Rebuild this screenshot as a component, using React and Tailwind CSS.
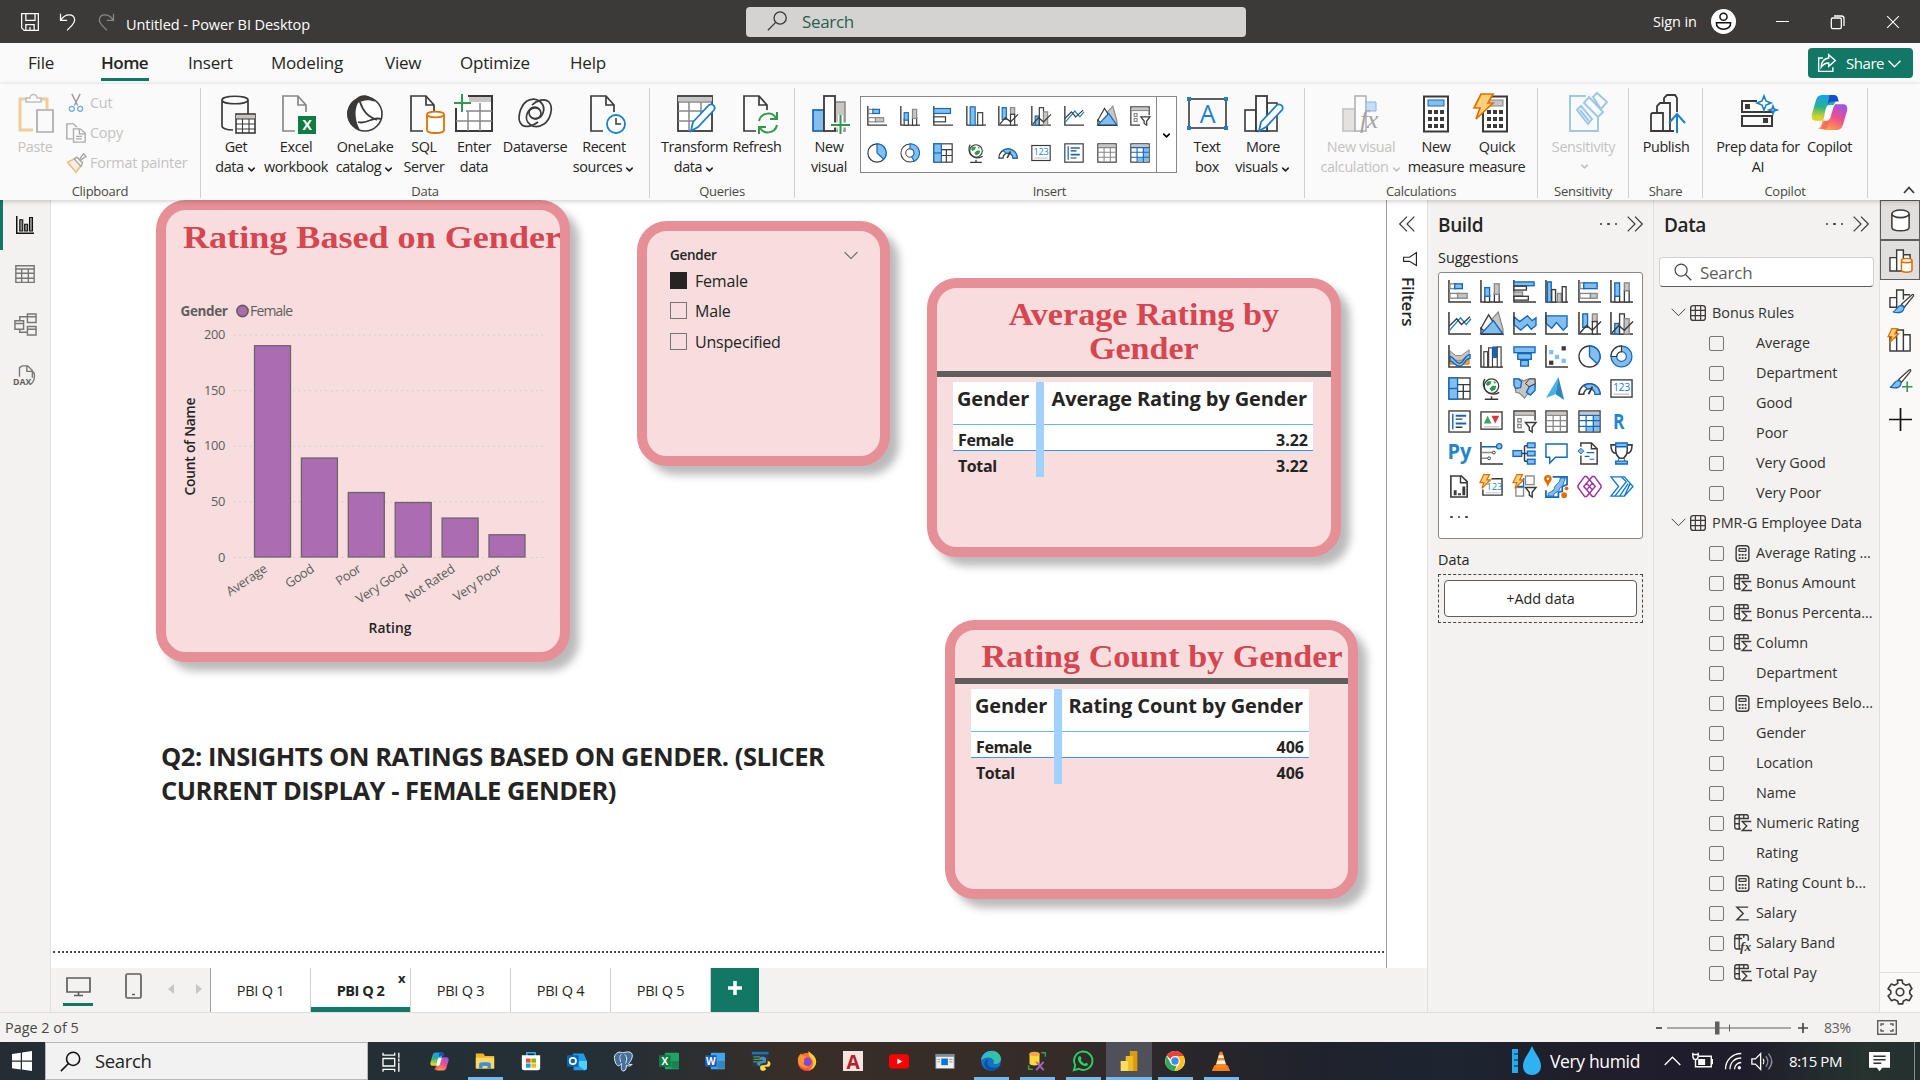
import React from "react";
import { ChevronDown } from "lucide-react";

const D = "#3b3a39";
const B = "#83beec";
const S = "#1068bf";
const G = "#c8c6c4";
const H = "#8a8886";
const O = "#e07000";

const Svg = ({ w = 24, h, vb, className = "", children }) => (
  <svg width={w} height={h || w} viewBox={vb || "0 0 24 24"} fill="none" className={"shrink-0 overflow-visible " + className}>
    {children}
  </svg>
);

const Axis = () => <path d="M1 0V23H24" stroke={D} strokeWidth="1.6" />;
const R = ({ x, y, w, h, f = "#fff", s = D, sw = 1.4 }) => (
  <rect x={x} y={y} width={w} height={h} fill={f} stroke={s} strokeWidth={sw} />
);
const Bolt = () => <path d="M5 .5h6L8 6h4L3 15l2-6H1z" fill="#ffd079" stroke={O} strokeWidth="1.3" />;
const Funnel = () => <path d="M13 13h11l-4 5v5l-3-2v-3z" fill="#fff" stroke={D} strokeWidth="1.5" />;

/* Visual type glyphs, all drawn on a 24 x 24 grid */
const V = {
  stackedBar: <><Axis /><R x={2} y={4} w={6} h={5} s={H} /><R x={7} y={4} w={8} h={5} f={B} s={S} /><R x={2} y={14} w={9} h={5} s={H} /><R x={10} y={14} w={10} h={5} f={G} s={H} /></>,
  stackedCol: <><Axis /><R x={5} y={16} w={5} h={7} s={D} /><R x={5} y={8} w={5} h={9} f={B} s={S} /><R x={15} y={14} w={5} h={9} s={D} /><R x={15} y={4} w={5} h={11} f={G} s={H} /></>,
  clusterBar: <><Axis /><R x={1} y={2} w={21} h={4} f={B} s={S} /><R x={1} y={6.5} w={13} h={4} s={D} /><R x={1} y={12.5} w={9} h={4} f={G} s={H} /><R x={1} y={17} w={15} h={4} s={D} /></>,
  clusterBarS: <><Axis /><R x={1} y={3} w={20} h={6} f={B} s={S} /><R x={1} y={13} w={14} h={6} s={D} /></>,
  clusterCol: <><Axis /><R x={2.5} y={2} w={4} h={21} f={B} s={S} /><R x={7} y={10} w={4} h={13} /><R x={13} y={14} w={4} h={9} f={G} s={H} /><R x={18} y={7} w={4} h={16} /></>,
  clusterColS: <><Axis /><R x={5} y={1} w={6} h={22} f={B} s={S} /><R x={14} y={8} w={6} h={15} /></>,
  fullBar: <><Axis /><R x={2} y={3} w={5} h={6} s={H} /><R x={6} y={3} w={14} h={6} f={B} s={S} /><R x={2} y={14} w={11} h={5} s={H} /><R x={13} y={14} w={7} h={5} f={G} s={H} /></>,
  fullCol: <><Axis /><R x={5} y={17} w={5} h={6} /><R x={5} y={3} w={5} h={14} f={B} s={S} /><R x={15} y={11} w={5} h={12} /><R x={15} y={3} w={5} h={8} f={G} s={H} /></>,
  line: <><Axis /><path d="M1 20 13 6l6 7 5-6" stroke="#1a86d0" strokeWidth="1.4" /><path d="M1 15 9 7l5 6 9-8" stroke={D} strokeWidth="1.4" /></>,
  area: <><path d="M12 8 19 0l5 18v5z" fill={G} stroke={H} strokeWidth="1.3" /><path d="M1 17 9 3l7 11-8 9z" fill="#fff" stroke={D} strokeWidth="1.4" /><path d="M1 23 14 9l10 14z" fill={B} stroke={S} strokeWidth="1.4" /><path d="M1 23V16M1 23.2H24" stroke={D} strokeWidth="1.5" /></>,
  stackedArea: <><path d="m1 5 6 5 8-6 5 5 4-3v8l-5 4-4-5-7 6-7-6z" fill={B} stroke={S} strokeWidth="1.4" /><Axis /></>,
  fullArea: <><path d="M1 4h22v11l-4 4-7-8-5 6-6-5z" fill={B} stroke={S} strokeWidth="1.4" /><Axis /></>,
  lineStack: <><Axis /><R x={5} y={2} w={5} h={14} f={B} s={S} /><R x={15} y={2} w={5} h={8} f={G} s={H} /><R x={15} y={10} w={5} h={13} /><path d="m2 22 7-8 6 5 9-9" stroke={D} strokeWidth="1.5" /></>,
  lineCluster: <><Axis /><R x={5} y={12} w={5} h={11} f={B} s={S} /><R x={10} y={2} w={5} h={21} /><R x={15} y={7} w={5} h={16} f={G} s={H} /><path d="m2 22 7-8 6 5 9-9" stroke={D} strokeWidth="1.5" /></>,
  ribbon: <><path d="M2 14h20v6H2z" fill="#f7a64a" stroke={O} /><path d="m2 6 6 5h6l8-6v5l-8 6H8l-6-5z" fill={G} stroke={H} /><path d="M2 12c5 0 5 7 10 7s5-9 11-9v4c-6 0-5 8-11 8S7 17 2 17z" fill={B} stroke={S} strokeWidth="1.4" /><Axis /></>,
  waterfall: <><Axis /><R x={4} y={7} w={4} h={16} sw={1.2} /><R x={9} y={3} w={4} h={20} sw={1.2} /><R x={13.5} y={2} w={4} h={11} f={S} s={S} sw={1} /><R x={18} y={2} w={4} h={21} sw={1.2} /></>,
  funnel: <><R x={1} y={2} w={22} h={6} f={B} s={S} /><R x={5} y={9} w={14} h={6} f={B} s={S} /><R x={8} y={16} w={8} h={6} f={B} s={S} /></>,
  scatter: <><Axis /><R x={5} y={6} w={3} h={3} f={B} s={B} /><R x={18} y={2} w={3} h={3} f={D} /><R x={11} y={11} w={3} h={3} f={B} s={B} /><R x={5} y={17} w={3} h={3} f={D} /><R x={18} y={15} w={3} h={3} f={B} s={B} /></>,
  pie: <><circle cx="12" cy="12" r="11" fill="#fff" stroke={D} strokeWidth="1.4" /><path d="M12 1a11 11 0 0 1 8 18.5L12 12z" fill={B} stroke={S} strokeWidth="1.4" /></>,
  donut: <><circle cx="12" cy="12" r="8" stroke={S} strokeWidth="7" /><circle cx="12" cy="12" r="8" stroke={B} strokeWidth="4.6" /><path d="M12 1A11 11 0 0 0 1 12h6a5 5 0 0 1 5-5z" fill="#fff" stroke={D} strokeWidth="1.3" /></>,
  donutS: <><circle cx="12" cy="12" r="8" stroke={D} strokeWidth="7" /><circle cx="12" cy="12" r="8" stroke="#fff" strokeWidth="4.6" /><path d="M12 1a11 11 0 0 1 5 21l-3-5.500A5 5 0 0 0 12 7z" fill={B} stroke={S} strokeWidth="1.3" /></>,
  treemap: <><R x={1} y={1} w={22} h={22} /><R x={1} y={1} w={9} h={22} f={B} s={S} /><path d="M1 12h9" stroke={S} strokeWidth="1.4" /><path d="M10 8h13M16 8v15M16 15h7M10 15h6" stroke={D} strokeWidth="1.4" /></>,
  globe: <><circle cx="12" cy="9.5" r="7.5" fill="#fff" stroke={D} strokeWidth="1.3" /><path d="M8 4.500h4l-1 3-3 2-2-2zM13 9l4 0-1 4-4 2-2-3zM14 4l3 2-2 1z" fill="#2f9a4c" /><path d="M5 2a10.500 10.500 0 0 0 15 14M12 20v3M5 23.200h14" stroke={D} strokeWidth="1.5" /></>,
  filledMap: <><path d="M1 2h5l5 2 6-2h6v9l-3 6-5 1-3 4-5-5-4-1z" fill={G} stroke={H} strokeWidth="1.3" /><path d="M1 2h5l3 3-1 6-5 1-2-3zM17 10l6-3v7l-5 5-4-3z" fill={B} stroke={S} strokeWidth="1.4" /><path d="M13 7l4-5h6v5l-6 3z" fill={G} stroke={D} strokeWidth="1" /></>,
  azure: <><path d="M14 0 1 22l10-4z" fill="#47b0e8" /><path d="m14 0 6 24-9-6z" fill="#2f86bd" /></>,
  gauge: <><path d="M1 18a11 11 0 0 1 22 0h-5a6 6 0 0 0-12 0z" fill="#fff" stroke={D} strokeWidth="1.5" /><path d="M6 9a11 11 0 0 1 17 9h-5a6 6 0 0 0-8-5.500z" fill={B} stroke={S} strokeWidth="1.3" /><path d="m11 18 4-8" stroke={D} strokeWidth="2" /></>,
  card: <><R x={1} y={3} w={22} h={18} /><text x="12" y="14.5" fontSize="11" letterSpacing="-.3" textAnchor="middle" fill="#1a86d0" fontFamily="Open Sans">123</text><path d="M4 18h16" stroke={G} strokeWidth="1.4" /></>,
  multiCard: <><R x={1} y={1} w={22} h={22} /><path d="M5 4v16" stroke={S} strokeWidth="1.5" /><path d="M8 6h11M8 14h11" stroke={S} strokeWidth="2" /><path d="M8 9.500h7M8 18h7" stroke={D} strokeWidth="1.4" /></>,
  kpi: <><R x={1} y={2} w={22} h={18} /><path d="m4 14 4-8 4 8z" fill="#3da35d" /><path d="M12 6h8l-4 8z" fill="#e0343a" /><path d="M4 17.500h16" stroke={G} strokeWidth="1.4" /></>,
  slicer: <><path d="M12 23H1V1h22v10" fill="#fff" stroke={D} strokeWidth="1.5" /><path d="M2 2h20v3H2z" fill={G} /><path d="M1 5.500h22" stroke={H} strokeWidth="1.3" /><R x={5} y={9} w={3.5} h={3.5} s={H} /><R x={5} y={15} w={3.5} h={3.5} s={H} /><Funnel /></>,
  table: <><R x={1} y={1} w={22} h={22} /><path d="M2 2h20v3H2z" fill={G} /><path d="M1 5.500h22M1 11h22M1 17h22M8.500 5v18M16 5v18" stroke={H} strokeWidth="1.3" /></>,
  matrix: <><R x={1} y={1} w={22} h={22} /><path d="M2 2h20v3H2z" fill={G} /><path d="M15.500 6H22v16H9v-5h6.500z" fill={B} /><path d="M1 5.500h22M1 11h22M1 17h22M8.500 5v18M16 5v18" stroke={S} strokeWidth="1.3" /></>,
  r: <text x="9" y="20" fontSize="23" fontWeight="700" textAnchor="middle" fill="#1f86cc" textLength="12" lengthAdjust="spacingAndGlyphs" fontFamily="Open Sans">R</text>,
  py: <text x="12" y="18" fontSize="22" fontWeight="700" textAnchor="middle" fill="#1f86cc" textLength="25" lengthAdjust="spacingAndGlyphs" fontFamily="Open Sans">Py</text>,
  key: <><Axis /><path d="M2 5h15" stroke={S} strokeWidth="1.6" /><circle cx="20" cy="4.5" r="2.8" fill={B} stroke={S} strokeWidth="1.3" /><path d="M2 11h11M2 17h6" stroke={H} strokeWidth="1.5" /><circle cx="14.5" cy="11" r="1.5" stroke={D} /><circle cx="9.5" cy="17" r="1.5" stroke={D} /></>,
  tree: <><path d="M9 12h6M12 4v16M12 4h4M12 20h4" stroke={D} strokeWidth="1.5" /><R x={0} y={9} w={9} h={6} f={B} s={S} /><R x={15} y={1} w={8} h={5} f={B} s={S} /><R x={15} y={9.5} w={8} h={5} f={B} s={S} /><R x={15} y={18} w={8} h={5} f={B} s={S} /></>,
  qa: <path d="M1 2h22v14H11l-6 6v-6H1z" fill="#fff" stroke={S} strokeWidth="1.5" />,
  narrative: <><path d="M3 5V1h11l6 6v16H3v-9" fill="#fff" stroke={D} strokeWidth="1.5" /><path d="M14 1v6h6" stroke={D} strokeWidth="1.4" /><path d="m3 6.500 3 3-3 3-3-3z" fill={B} stroke={S} /><path d="M9 11h8M7 15h5M12 18h5" stroke={S} strokeWidth="1.3" /></>,
  trophy: <><path d="M6 3H1c0 6 2 9 6 9M18 3h5c0 6-2 9-6 9" stroke={D} strokeWidth="1.6" /><path d="M6 3h12v6c0 5-3 7-4 8h-4c-1-1-4-3-4-8z" fill="#fff" stroke={D} strokeWidth="1.5" /><path d="M6 1h12v4H6zM6 20h12v3H6z" fill={B} stroke={S} strokeWidth="1.4" /><path d="M9 17v3M15 17v3" stroke={S} /></>,
  paginated: <><path d="M3 1h11l6 6v16H3z" fill="#fff" stroke={D} strokeWidth="1.7" /><path d="M13 1v7h7" stroke={D} strokeWidth="1.5" /><path d="M7.500 16v5M12 19v2M16.500 12v9" stroke={D} strokeWidth="3" /></>,
  quickCard: <><path d="M3 15v6h20V4H12" stroke={D} strokeWidth="1.5" /><text x="15" y="16" fontSize="10" textAnchor="middle" fill="#1a86d0" fontFamily="Open Sans">123</text><path d="M6 18.500h14" stroke={G} /><g transform="translate(-1 -1)"><Bolt /></g></>,
  quickSlicer: <><R x={3} y={13} w={8} h={9} s={H} /><R x={13} y={1} w={9} h={9} s={H} /><path d="M3 12h8V3" stroke={S} strokeWidth="1.4" /><Funnel /><g transform="translate(-1 -1)"><Bolt /></g></>,
  arcgis: <><path d="M8 2h15v8l-5 2v5l-4 1v5H1v-7" stroke={S} strokeWidth="1.8" fill="#fff" /><path d="M16 3c-1 6-2 4-5 8s1 3-4 6-3 1-4 5h6c0-5 5-3 6-7s4-2 4-5 2-3 2-7z" fill={B} stroke={S} /><path d="M-1 4a4 4 0 0 1 8 0c0 3-3 4-4 9-1-5-4-6-4-9z" fill={O} /><circle cx="3" cy="4" r="1.3" fill="#fff" /><circle cx="20" cy="21" r="3" fill={O} /><circle cx="22.5" cy="14" r="2" fill={O} /></>,
  powerApps: <path d="m12 5 6 7-6 7-6-7zM12 5l3-3.500h2L24 11v2l-7 9.500h-2L12 19l-3 3.500H7L0 13v-2l7-9.500h2zM9 8.500l6 7M15 8.500l-6 7" stroke="#9b30a2" strokeWidth="1.5" />,
  automate: <path d="M1 2h14l9 10-9 10H1l8-10zM1 2l8 10M12 2l5 5L5 22M15 22 21 9M10 22 19 9" stroke="#1079d8" strokeWidth="1.4" />,
};

const buildGrid = ["stackedBar", "stackedCol", "clusterBar", "clusterCol", "fullBar", "fullCol", "line", "area", "stackedArea", "fullArea", "lineStack", "lineCluster", "ribbon", "waterfall", "funnel", "scatter", "pie", "donut", "treemap", "globe", "filledMap", "azure", "gauge", "card", "multiCard", "kpi", "slicer", "table", "matrix", "r", "py", "key", "tree", "qa", "narrative", "trophy", "paginated", "quickCard", "quickSlicer", "arcgis", "powerApps", "automate"];
const galleryGrid = ["stackedBar", "stackedCol", "clusterBarS", "clusterColS", "lineStack", "lineCluster", "line", "area", "slicer", "pie", "donutS", "treemap", "globe", "gauge", "card", "multiCard", "table", "matrix"];

const Doc = ({ c = D }) => (
  <path d="M16 37H4V2h15l8 9v7M19 2v9h8" stroke={c} strokeWidth="1.7" fill="none" />
);
const Cal = () => (
  <g>
    <rect x="1" y="1.5" width="24" height="35" fill="#fff" stroke={D} strokeWidth="2" />
    {[16, 23, 30].map((y) => [5, 11, 17].map((cx) => <rect key={cx + "-" + y} x={cx} y={y - 1} width="4" height="4" fill={D} />))}
  </g>
);
const Pencil = () => <path d="m18 28 16-17c4-2 7 2 5 5L23 33l-7 4z" fill="#fff" stroke="#1a80c8" strokeWidth="1.8" />;

/* Ribbon command glyphs on a 40 x 40 grid */
const I = {
  paste: <g opacity=".5"><path d="M16 36H3V5h27v10" stroke="#e8a33d" strokeWidth="3" fill="none" /><path d="M9 8h15V4h-4a3.500 3.500 0 0 0-7 0H9z" fill="#fff" stroke={H} strokeWidth="1.6" /><path d="M20 16h16v22H20z" fill="#fafafa" stroke="#605e5c" strokeWidth="1.7" /></g>,
  getData: <><path d="M15 36C8 36 4 34 4 32V6c0-5 26-5 26 0v14M4 6c0 5 26 5 26 0" stroke={D} strokeWidth="1.7" fill="none" /><rect x="18" y="20" width="19" height="19" fill="#fff" stroke={D} strokeWidth="1.6" /><path d="M18 21h19v4H18z" fill={G} /><path d="M18 25h19M18 30h19M18 35h19M24.500 25v14M31 25v14" stroke={D} strokeWidth="1.1" /></>,
  excel: <><Doc c={H} /><rect x="19" y="22" width="18" height="18" fill="#107c41" /><text x="28" y="36" fill="#fff" fontSize="14" fontWeight="700" textAnchor="middle" fontFamily="Open Sans">X</text></>,
  onelake: <><circle cx="20" cy="20" r="17" fill="#fff" stroke={D} strokeWidth="1.6" /><path d="M12 4c5-5 14-3 18 4-6-3-12-2-17 1-4 7-3 18 2 27C0 31-1 15 8 7z" fill={D} /><path d="M15 8c3 9 7 14 17 18M13 28c9 3 14-6 23-3" stroke={D} strokeWidth="1.8" /></>,
  sql: <><Doc /><path d="M20 21v15c0 4 17 4 17 0V21" fill="#fff" stroke={O} strokeWidth="1.8" /><ellipse cx="28.5" cy="20.5" rx="8.5" ry="2.8" fill="#fff" stroke={O} strokeWidth="1.8" /></>,
  enter: <><path d="M2 14v23h36V2H14" stroke={D} strokeWidth="2" fill="#fff" /><path d="M15 3h22v5H15z" fill={G} /><path d="M12 17h26M2 27h36M14 17v20M26 9v28" stroke={H} strokeWidth="1.5" /><path d="M8 0v18M0 9h17" stroke="#2f9a4c" strokeWidth="2" /></>,
  dataverse: <><path d="M23 28c-5 4-12 6-16 3-6-5-2-19 5-24 11-6 19 4 16 12-3 8-13 7-14 0 0-5 6-8 10-4" stroke={D} strokeWidth="1.7" fill="none" /><path d="M17 11c5-5 13-7 17-3 5 6 1 18-5 22-11 7-20-2-17-10 3-8 13-8 14-1 0 5-6 8-10 4" stroke={D} strokeWidth="1.7" fill="none" /></>,
  recent: <><Doc /><circle cx="29" cy="30" r="9" fill="#fff" stroke="#1a80c8" strokeWidth="1.8" /><path d="M29 24v6h5" stroke={D} strokeWidth="1.5" /></>,
  transform: <><rect x="3" y="2" width="34" height="35" fill="#fff" stroke={D} strokeWidth="1.8" /><path d="M3 3h34v4H3z" fill={G} /><path d="M3 8h34M3 17h34M3 27h20M14 8v29M26 8v12" stroke={H} strokeWidth="1.5" /><Pencil /></>,
  refresh: <><path d="M16 37H4V2h15l8 9v5M19 2v9h8" stroke={D} strokeWidth="1.7" /><path d="M19 27c2-9 15-10 17-2M37 18v7h-7M37 31c-2 9-15 10-17 2M19 40v-7h7" stroke="#2f9a4c" strokeWidth="2" /></>,
  newVisual: <><rect x="2" y="16" width="11" height="21" fill={B} stroke={S} strokeWidth="1.7" /><rect x="24" y="8" width="10" height="29" fill={G} stroke={H} strokeWidth="1.5" /><rect x="13" y="2" width="11" height="35" fill="#fff" stroke={D} strokeWidth="1.8" /><path d="M29.500 21v19M20 31h19" stroke="#fafafa" strokeWidth="5" /><path d="M29.500 21v19M20 31h19" stroke="#2f9a4c" strokeWidth="2" /></>,
  textBox: <><rect x="2" y="5" width="37" height="29" stroke={D} strokeWidth="1.6" /><path d="M0 3h4v4H0zM37 3h4v4h-4zM0 32h4v4H0zM37 32h4v4h-4z" fill="#1a80c8" /><text x="20.5" y="29" fill="#1a80c8" fontSize="25" textAnchor="middle" fontFamily="Open Sans">A</text></>,
  more: <><rect x="2" y="16" width="11" height="21" fill="#fff" stroke={D} strokeWidth="1.6" /><rect x="24" y="9" width="10" height="28" fill="#fff" stroke={D} strokeWidth="1.6" /><rect x="13" y="2" width="11" height="35" fill="#fff" stroke={D} strokeWidth="1.8" /><Pencil /></>,
  calc: <g opacity=".45"><rect x="2" y="15" width="12" height="22" fill={G} stroke={H} strokeWidth="1.7" /><rect x="14" y="2" width="11" height="35" fill="#fff" stroke="#605e5c" strokeWidth="1.6" /><path d="M25 8h10v9H25z" fill={B} stroke={S} /><text x="28" y="34" fontSize="26" fontStyle="italic" textAnchor="middle" fill={D} fontFamily="Liberation Serif">fx</text></g>,
  measure: <g transform="translate(7 1)"><Cal /><rect x="5" y="5" width="16" height="6" fill={B} stroke={S} /></g>,
  quick: <><g transform="translate(7 1)"><Cal /><rect x="5" y="5" width="16" height="6" fill={G} stroke={H} /></g><path d="M6 0h12l-5 9h5L1 25l4-11h-6z" fill="#ffd079" stroke={O} strokeWidth="1.7" /></>,
  sensitivity: <g opacity=".4" stroke="#1a80c8" strokeWidth="2"><path d="M20 2H4v35h28V18" fill="#f3f9fd" /><path d="m11 16 4-4 11 13-4 5z" /><path d="m14 16 9 11M18 9l5-6 14 15-5 5zM27 3l4-4 10 9-6 7z" fill="#fff" /></g>,
  publish: <><path d="M3 21a2 2 0 0 1 2-2h10v18H3zM9 19v-7l3-3h10v28h-7M16 9V4l3-3h8l2 3v14M22 37h4" stroke={D} strokeWidth="1.8" /><path d="M29 39V20M21 29l8-9 8 9" stroke="#1a80c8" strokeWidth="2" /></>,
  prep: <><path d="M18 7H3v11h31v-3" stroke={D} strokeWidth="2" /><rect x="3" y="22" width="30" height="10" stroke={D} strokeWidth="2" /><path d="M6 10h5v5H6zM24 24h5v5h-5z" fill={D} /><path d="m25 2 2 5 5 2-5 2-2 5-2-5-5-2 5-2zM34 12l1 3 3 1-3 1-1 3-1-3-3-1 3-1z" fill="#fff" stroke="#1a80c8" strokeWidth="1.6" /></>,
};

const CopilotLogo = ({ size, id }) => (
  <Svg w={size} vb="0 0 40 40">
    <defs>
      <linearGradient id={id + "a"} x1=".3" y1="0" x2=".2" y2="1"><stop offset="0" stopColor="#19a0f0" /><stop offset=".45" stopColor="#25b38a" /><stop offset=".85" stopColor="#d8d426" /></linearGradient>
      <linearGradient id={id + "b"} x1=".8" y1="0" x2=".3" y2="1"><stop offset="0" stopColor="#9a55ee" /><stop offset=".5" stopColor="#ee4f8c" /><stop offset="1" stopColor="#ffa04a" /></linearGradient>
    </defs>
    <path d="M29 4c-1-2-3-3-5-3H12C8 1 6 4 5 8L1 22c-1 5 1 7 5 7h8z" fill={`url(#${id}a)`} />
    <path d="M20 1h5c3 0 4 3 5 7h-6c-3 0-5 1-6 4z" fill="#1550cc" />
    <path d="M11 36c1 2 3 3 5 3h12c4 0 6-3 7-7l4-14c1-5-1-7-5-7h-8z" fill={`url(#${id}b)`} />
    <path d="m17 13-5 18c-1 4-2 6-5 6l5 1c4 0 6-1 7-5l4-15z" fill="#f06a55" opacity=".8" />
    <path d="M23 12h-3c-2 0-3 1-4 4l-3 13h3c2 0 4-1 5-4l4-13z" fill="#fff" />
  </Svg>
);

const Chev = () => <ChevronDown size={11} strokeWidth={3.5} className="ml-0.5 mt-1 inline-block" />;

const Cmd = ({ w, icon, nudge = "", a, b, chev, dim, children }) => (
  <div className={`flex shrink-0 flex-col items-center whitespace-nowrap pt-[6px] text-[14.4px] leading-5 tracking-[-0.025em] ${w} ${dim ? "text-[#c4c2c0]" : "text-[#252423]"}`}>
    <div className={"flex h-[43px] items-start justify-center " + nudge}>{children || <Svg w={40} vb="0 0 40 40">{I[icon]}</Svg>}</div>
    <div className="flex justify-center">{a}</div>
    <div className="flex items-center justify-center">{b}{chev && <Chev />}</div>
  </div>
);

const Group = ({ w, pad = "", label, children }) => (
  <div className={`flex h-full shrink-0 flex-col border-r border-[#d2d0ce] ${w}`}>
    <div className={`flex h-[94px] shrink-0 ${pad}`}>{children}</div>
    <div className="text-center text-[13px] leading-[18px] tracking-[-0.02em] text-[#484644]">{label}</div>
  </div>
);

function TitleBar() {
  return (
    <header className="flex h-[43px] shrink-0 items-center bg-[#3b3a38] text-white">
      <div className="flex h-full w-[746px] items-center pl-[20px]">
        <Svg w={20}><path d="M2 2h20v20H5l-3-3zM7 2v8h11V2M7 22v-7h10v7M12 18v4" stroke="#fff" strokeWidth="1.5" /></Svg>
        <Svg w={20} className="ml-[18px]"><path d="M3 2v8h8M3 10C9 1 19 2 20 9c0 6-6 9-9 13" stroke="#fff" strokeWidth="1.5" /></Svg>
        <Svg w={20} className="ml-[18px] opacity-40"><path d="M21 2v8h-8M21 10C15 1 5 2 4 9c0 6 6 9 9 13" stroke="#fff" strokeWidth="1.5" /></Svg>
        <span className="ml-[10px] pt-[6px] text-[14.5px] tracking-[-0.005em]">Untitled - Power BI Desktop</span>
      </div>
      <div className="flex h-[30px] w-[500px] items-center rounded-sm bg-[#d4d3d1] pl-[21px]">
        <Svg w={21}><circle cx="15" cy="8" r="7" stroke="#3b3a39" strokeWidth="1.5" /><path d="M10 13 1 22" stroke="#3b3a39" strokeWidth="1.5" /></Svg>
        <span className="ml-[14px] text-[17px] tracking-[-0.02em] text-[#26614f]">Search</span>
      </div>
      <div className="ml-[407px] flex items-center">
        <span className="w-[47px] whitespace-nowrap text-[14.5px] tracking-[-0.01em]">Sign in</span>
        <span className="ml-[11px] flex size-[25px] items-center justify-center rounded-full bg-white">
          <Svg w={19}><circle cx="12" cy="6" r="4.5" stroke="#111" strokeWidth="1.9" /><path d="M3 13.500h18c1 11-19 11-18 0z" stroke="#111" strokeWidth="1.9" /></Svg>
        </span>
        <span className="ml-[40px] h-[1.5px] w-[13px] bg-white" />
        <Svg w={16} className="ml-[41px]"><rect x="2" y="6" width="15" height="16" rx="2" stroke="#fff" strokeWidth="1.9" /><path d="M6 3h11c3 0 4 2 4 4v11" stroke="#fff" strokeWidth="1.9" /></Svg>
        <Svg w={14} className="ml-[40px]"><path d="m2 2 20 20M22 2 2 22" stroke="#fff" strokeWidth="1.8" /></Svg>
      </div>
    </header>
  );
}

function MenuTabs() {
  return (
    <nav className="flex h-[41px] shrink-0 items-start bg-[#fafafa] text-[17px] leading-[40px] tracking-[-0.012em] text-[#252423]">
      <span className="ml-[28px] w-[73px]">File</span>
      <span className="mr-[39px] h-[38px] w-[48px] border-b-[3px] border-[#117865] font-semibold tracking-[-0.03em]">Home</span>
      <span className="w-[83px]">Insert</span>
      <span className="w-[114px]">Modeling</span>
      <span className="w-[75px]">View</span>
      <span className="w-[110px]">Optimize</span>
      <span className="w-[60px]">Help</span>
      <div className="ml-auto mr-[7px] mt-[5px] flex h-[30px] w-[105px] items-center rounded bg-[#117865] pl-[9px] text-[15px] tracking-[-0.03em] text-white">
        <Svg w={20}><path d="M7 6H2v16h17v-5" stroke="#fff" strokeWidth="1.7" /><path d="M14 2l8 7-8 7v-4c-5 0-7 2-9 5 0-6 3-10 9-11z" stroke="#fff" strokeWidth="1.7" /></Svg>
        <span className="ml-[9px] w-[38px]">Share</span>
        <Svg w={13} className="ml-[4px]"><path d="m1 7 11 11L23 7" stroke="#fff" strokeWidth="2.5" /></Svg>
      </div>
    </nav>
  );
}

function Ribbon() {
  return (
    <section className="relative z-10 flex h-[116px] shrink-0 items-start bg-[#fafafa] pt-1 shadow-[0_1px_5px_rgba(0,0,0,0.22)]">
      <div className="flex h-[110px]">
        <Group w="w-[201px]" label="Clipboard">
          <Cmd w="w-[70px]" nudge="pl-[4px]" a="Paste" dim icon="paste" />
          <div className="-ml-[4px] flex flex-col text-[14.4px] tracking-[-0.015em] text-[#c4c2c0]">
            <div className="flex h-[30px] items-center"><Svg w={20}><g opacity=".6"><path d="m7 1 7 14M17 1l-7 14" stroke="#605e5c" strokeWidth="1.7" /><circle cx="7" cy="19" r="3" stroke="#1a80c8" strokeWidth="1.6" /><circle cx="17" cy="19" r="3" stroke="#1a80c8" strokeWidth="1.6" /></g></Svg><span className="ml-1">Cut</span></div>
            <div className="flex h-[30px] items-center"><Svg w={20}><g opacity=".5"><path d="M8 19H1V1h8l4 4" stroke="#605e5c" strokeWidth="1.7" /><path d="M9 7h8l6 5v11H9zM16 7v6h7M12 16h7M12 19h7" stroke="#605e5c" strokeWidth="1.6" /></g></Svg><span className="ml-1">Copy</span></div>
            <div className="flex h-[30px] items-center"><Svg w={20}><g opacity=".55"><path d="m2 11 8-4 8 8-6 8z" stroke="#e08a20" strokeWidth="1.8" fill="#fde6c8" /><path d="m10 7 3-2 3 3 5-7 3 3-7 5 3 3-2 4z" fill="#fff" stroke="#605e5c" strokeWidth="1.6" /></g></Svg><span className="ml-1 whitespace-nowrap">Format painter</span></div>
          </div>
        </Group>
        <Group w="w-[449px]" pad="pl-[5px]" label="Data">
          <Cmd w="w-[60px]" nudge="pl-[4px]" icon="getData" a="Get" b="data" chev />
          <Cmd w="w-[60px]" nudge="pl-[5px]" icon="excel" a="Excel" b="workbook" />
          <Cmd w="w-[78px]" icon="onelake" a="OneLake" b="catalog" chev />
          <Cmd w="w-[40px]" nudge="translate-x-[3px]" icon="sql" a="SQL" b="Server" />
          <Cmd w="w-[60px]" icon="enter" a="Enter" b="data" />
          <Cmd w="w-[62px]" icon="dataverse" a="Dataverse" />
          <Cmd w="w-[76px]" nudge="pl-[5px]" icon="recent" a="Recent" b="sources" chev />
        </Group>
        <Group w="w-[145px]" pad="pl-[13px]" label="Queries">
          <Cmd w="w-[63px]" icon="transform" a="Transform" b="data" chev />
          <Cmd w="w-[62px]" nudge="pl-[5px]" icon="refresh" a="Refresh" />
        </Group>
        <Group w="w-[510px]" pad="pl-[5px]" label="Insert">
          <Cmd w="w-[58px]" nudge="pl-[4px]" icon="newVisual" a="New" b="visual" />
          <div className="ml-[2px] mt-[8px] flex h-[77px] w-[317px] shrink-0 border border-[#8a8886] bg-white">
            <div className="grid w-[295px] grid-cols-9 items-center justify-items-center">
              {galleryGrid.map((k) => <Svg key={k} w={20}>{V[k]}</Svg>)}
            </div>
            <div className="flex flex-1 items-center justify-center border-l border-[#8a8886] pt-[2px]"><ChevronDown size={11} strokeWidth={3.5} /></div>
          </div>
          <Cmd w="w-[60px]" icon="textBox" a="Text" b="box" />
          <Cmd w="w-[52px]" icon="more" a="More" b="visuals" chev />
        </Group>
        <Group w="w-[233px]" pad="pl-[12px]" label="Calculations">
          <Cmd w="w-[88px]" icon="calc" a="New visual" b="calculation" chev dim />
          <Cmd w="w-[62px]" icon="measure" a="New" b="measure" />
          <Cmd w="w-[60px]" nudge="-translate-x-[2px]" icon="quick" a="Quick" b="measure" />
        </Group>
        <Group w="w-[91px]" label="Sensitivity"><Cmd w="w-[91px]" nudge="pl-[4px]" icon="sensitivity" a="Sensitivity" chev dim /></Group>
        <Group w="w-[74px]" label="Share"><Cmd w="w-[74px]" nudge="pl-[4px]" icon="publish" a="Publish" /></Group>
        <Group w="w-[165px]" pad="pl-[11px]" label="Copilot">
          <Cmd w="w-[88px]" nudge="pl-[2px]" icon="prep" a="Prep data for" b="AI" />
          <Cmd w="w-[55px]" a="Copilot"><CopilotLogo size={37} id="cp" /></Cmd>
        </Group>
      </div>
      <Svg w={12} className="ml-[35px] mt-[96px]"><path d="m2 18 10-11 10 11" stroke={D} strokeWidth="3.5" /></Svg>
    </section>
  );
}

function LeftRail() {
  return (
    <aside className="flex w-[51px] shrink-0 flex-col border-r border-[#e1dfdd] bg-[#f3f2f1]">
      <div className="flex h-[50px] items-center border-l-[3px] border-[#117865] pl-[13px]"><Svg w={18}><path d="M1 0v23h23" stroke="#111" strokeWidth="2" /><path d="M5 5h4v15H5zM11.500 11h4v9h-4zM18 2h4v18h-4z" fill={H} stroke="#111" strokeWidth="1.4" /></Svg></div>
      <div className="flex h-[47px] items-center justify-center"><Svg w={20}><path d="M1 2h22v20H1zM1 6h22M1 11h22M1 17h22M8 6v16M16 6v16" stroke="#797775" strokeWidth="1.7" /></Svg></div>
      <div className="flex h-[54px] items-center justify-center"><Svg w={23}><path d="M1 8h9v9H1zM1 11h9M14 1h9v9h-9zM14 4h9M14 14h9v9h-9zM14 17h9M6 8V4h8M6 17v3h8" stroke="#797775" strokeWidth="1.5" /></Svg></div>
      <div className="flex h-[47px] items-center justify-center"><Svg w={22}><path d="M6 14V4l3-2h6l5 5v8M14 2v6h6M20 8l2 2c1 4 0 10-4 12" stroke="#797775" strokeWidth="1.5" /><text x="-1" y="22.5" fontSize="9.5" fontWeight="700" fill="#605e5c" fontFamily="Open Sans">DAX</text></Svg></div>
    </aside>
  );
}

const bars = [["Average", 190], ["Good", 89], ["Poor", 58], ["Very Good", 49], ["Not Rated", 35], ["Very Poor", 20]];

const cardBase = "absolute overflow-visible rounded-[30px] border-[10px] border-[#e68f96] bg-[#f7dddd] shadow-[9px_9px_9px_rgba(0,0,0,0.27)]";
const titleCls = "whitespace-nowrap text-center font-['Georgia','Liberation_Serif',serif] font-bold text-[#d64550]";

function ChartCard() {
  return (
    <div className={cardBase + " left-[105px] top-0 h-[462px] w-[414px]"}>
      <div className="h-[56px] w-full overflow-hidden rounded-tr-[20px] pl-[17px] pt-[9px]">
        <div className={titleCls + " w-max origin-left scale-x-[1.128] text-[32px] leading-9"}>Rating Based on Gender</div>
      </div>
      <svg width="394" height="386" viewBox="166 266 394 386" fontFamily="Open Sans">
        <text x="180.5" y="316" fontSize="13.5" fontWeight="700" fill="#605e5c" textLength="47.5">Gender</text>
        <circle cx="242.5" cy="311" r="5.6" fill="#ab6cb2" stroke="#605e5c" strokeWidth="1.6" />
        <text x="250" y="316" fontSize="14" fill="#605e5c" textLength="43">Female</text>
        {[0, 50, 100, 150, 200].map((v) => {
          const y = 557.5 - (v * 222.5) / 200;
          return (
            <g key={v}>
              <path d={`M234 ${y}H544`} stroke="#cdbfbf" strokeDasharray="1.2 4.2" />
              <text x="225" y={y + 4} fontSize="12.8" letterSpacing="-.3" textAnchor="end" fill="#605e5c">{v}</text>
            </g>
          );
        })}
        {bars.map(([n, v], i) => {
          const x = 254.5 + i * 46.9;
          const h = v * 1.112;
          return (
            <g key={n}>
              <rect x={x} y={557 - h} width="36" height={h} fill="#ab6cb2" stroke="#6c6469" strokeWidth="1.3" />
              <text transform={`translate(${x + 13.5} 571) rotate(-34)`} fontSize="12.8" letterSpacing="-.35" textAnchor="end" fill="#605e5c">{n}</text>
            </g>
          );
        })}
        <text transform="translate(195 446.5) rotate(-90)" fontSize="13.8" fontWeight="600" textAnchor="middle" textLength="98" fill="#252423">Count of Name</text>
        <text x="390" y="633" fontSize="13.8" fontWeight="600" textAnchor="middle" textLength="43" fill="#252423">Rating</text>
      </svg>
    </div>
  );
}

function SlicerCard() {
  return (
    <div className={cardBase + " left-[586px] top-[21px] h-[245px] w-[253px] px-[23px] pt-[14px]"}>
      <div className="flex h-[20px] items-center justify-between text-[13.5px] font-semibold tracking-[-0.02em] text-[#252423]">
        <span>Gender</span>
        <Svg w={14} className="-mr-px"><path d="m1 7 11 11L23 7" stroke="#605e5c" strokeWidth="1.8" /></Svg>
      </div>
      {["Female", "Male", "Unspecified"].map((t, i) => (
        <div key={t} className="flex h-[30.5px] items-center text-[16px] tracking-[-0.012em] text-[#252423]">
          <span className={"size-[17px] border " + (i === 0 ? "border-[#252423] bg-[#252423]" : "border-[#7a7574]")} />
          <span className="ml-[8px] pt-px">{t}</span>
        </div>
      ))}
    </div>
  );
}

function TableCard({ pos, title, titleBox, tableW, measure, value }) {
  const head = "h-[43px] border-b border-[#6ab4fb] bg-white pt-[2px] text-[20px] leading-[30px] tracking-[-0.006em] whitespace-nowrap ";
  const row = "h-[26px] border-b border-[#3a96ee] bg-white text-[16px] leading-[31px] ";
  const total = "h-[26px] text-[16px] leading-[31px] ";
  return (
    <div className={cardBase + " " + pos}>
      <div className={"flex items-start justify-center border-b-[6px] border-[#605e5c] " + titleBox}>
        <div className={titleCls + " scale-x-110 text-[31px] leading-[33.5px]"}>{title.map((t) => <div key={t}>{t}</div>)}</div>
      </div>
      <div className={"ml-[16px] mt-[5px] grid grid-cols-[83px_8px_1fr] font-bold text-[#252423] " + tableW}>
        <div className={head + "pl-[4px]"}>Gender</div>
        <div className="row-span-3 bg-[#a0d1ff]" />
        <div className={head + "pr-[6px] text-right"}>{measure}</div>
        <div className={row + "pl-[5px] tracking-[-0.025em]"}>Female</div>
        <div className={row + "pr-[5px] text-right"}>{value}</div>
        <div className={total + "pl-[5px] tracking-[-0.025em]"}>Total</div>
        <div className={total + "pr-[5px] text-right"}>{value}</div>
      </div>
    </div>
  );
}

function ReportCanvas() {
  return (
    <main className="relative h-[768px] w-[1335px] shrink-0 overflow-hidden bg-white">
      <ChartCard />
      <SlicerCard />
      <TableCard pos="left-[876px] top-[78px] h-[279px] w-[414px]" title={["Average Rating by", "Gender"]} titleBox="h-[89px] pt-[10px] pl-[20px]" tableW="w-[360px]" measure="Average Rating by Gender" value="3.22" />
      <TableCard pos="left-[894px] top-[420px] h-[279px] w-[413px]" title={["Rating Count by Gender"]} titleBox="h-[54px] pt-[10px] pl-[21px]" tableW="w-[338px]" measure="Rating Count by Gender" value="406" />
      <p className="absolute left-[110px] top-[539px] whitespace-nowrap text-[25.5px] font-bold leading-[34px] tracking-[-0.018em] text-[#252423]">
        Q2: INSIGHTS ON RATINGS BASED ON GENDER. (SLICER<br />CURRENT DISPLAY - FEMALE GENDER)
      </p>
      <div className="absolute inset-x-[2px] top-[751px] border-t-2 border-dotted border-[#4a4846]" />
    </main>
  );
}

function PageTabs() {
  return (
    <div className="flex h-[44px] w-[1376px] bg-[#f3f2f1] text-[14.5px] tracking-[-0.015em] text-[#252423]">
      <div className="flex w-[160px] shrink-0 items-start border-r border-[#a19f9d] pl-[12px] pt-[5px]">
        <div className="flex w-[30px] flex-col items-center border-b-[3px] border-[#117865] pb-[6px] pt-[3px]"><Svg w={25} h={21} vb="0 0 25 21"><path d="M1 2h23v14H1zM12.500 16v3M8 19.500h9" stroke="#605e5c" strokeWidth="1.7" /></Svg></div>
        <Svg w={17} h={26} vb="0 0 17 26" className="ml-[32px]"><rect x="1" y="1" width="15" height="24" rx="1.5" stroke="#605e5c" strokeWidth="1.7" /><path d="M7 21.500h3" stroke="#605e5c" strokeWidth="1.5" /></Svg>
        <Svg w={7} h={10} vb="0 0 7 10" className="ml-[26px] mt-[11px]"><path d="M6 0v10L0 5z" fill="#c8c6c4" /></Svg>
        <Svg w={7} h={10} vb="0 0 7 10" className="ml-[21px] mt-[11px]"><path d="M0 0v10l6-5z" fill="#c8c6c4" /></Svg>
      </div>
      {[1, 2, 3, 4, 5].map((n) => (
        <div key={n} className={"relative flex w-[100px] items-center justify-center border-r border-[#d2d0ce] bg-white pb-px pt-0.5 " + (n === 2 ? "font-bold tracking-[-0.035em]" : "")}>
          PBI Q {n}
          {n === 2 && <><span className="absolute right-[5px] top-[1px] text-[13px]">x</span><span className="absolute inset-x-0 bottom-0 h-[5px] bg-[#117865]" /></>}
        </div>
      ))}
      <div className="flex w-[48px] items-center justify-center bg-[#117865]"><Svg w={14} className="-mt-1"><path d="M12 0v24M0 12h24" stroke="#fff" strokeWidth="6" /></Svg></div>
    </div>
  );
}

const Expand = ({ flip }) => <Svg w={16} className={flip ? "-scale-x-100" : ""}><path d="M1 1l11 11L1 23M12 1l11 11-11 11" stroke={D} strokeWidth="1.8" /></Svg>;
const Dots = () => <span className="flex gap-[5px]"><i className="size-[2.5px] rounded-full bg-[#3b3a39]" /><i className="size-[2.5px] rounded-full bg-[#3b3a39]" /><i className="size-[2.5px] rounded-full bg-[#3b3a39]" /></span>;

const PaneHead = ({ title }) => (
  <div className="flex h-[48px] shrink-0 items-center">
    <span className="mr-auto pt-[3px] text-[19px] font-semibold tracking-[-0.02em] text-[#252423]">{title}</span>
    <Dots />
    <span className="ml-[10px] mr-[10px]"><Expand /></span>
  </div>
);

function BuildPane() {
  return (
    <section className="flex w-[226px] shrink-0 flex-col border-l border-[#e1dfdd] bg-[#f3f2f1] pl-[10px] text-[14.4px] text-[#252423]">
      <PaneHead title="Build" />
      <div className="h-[24px] leading-5">Suggestions</div>
      <div className="h-[267px] w-[205px] rounded-[3px] border border-[#8a8886] bg-white pl-[4px] pt-[2px]">
        <div className="grid w-[195px] auto-rows-[32.5px] grid-cols-6 items-center justify-items-center">
          {buildGrid.map((k) => <Svg key={k} w={23}>{V[k]}</Svg>)}
        </div>
        <div className="ml-[7px] mt-[13px]"><Dots /></div>
      </div>
      <div className="mt-[9px] h-[26px] leading-6">Data</div>
      <div className="h-[49px] w-[205px] border border-dashed border-[#484644] p-[5px]">
        <div className="flex h-full items-center justify-center rounded-sm border border-[#605e5c] bg-white font-medium">+Add data</div>
      </div>
    </section>
  );
}

const FieldIcon = ({ k }) => {
  if (k === "calc") return <Svg w={17}><rect x="3" y="1" width="18" height="22" rx="4" stroke={D} strokeWidth="2" /><rect x="7" y="5" width="10" height="4" rx="1" stroke={D} strokeWidth="1.8" /><path d="M6.500 14h11M6.500 18.500h11" stroke={D} strokeWidth="2.6" strokeDasharray="2.8 1.5" /></Svg>;
  if (k === "sigma") return <Svg w={17}><path d="M20 3H4l9 9-9 9h17" stroke={D} strokeWidth="2" /></Svg>;
  if (k === "sum") return <Svg w={18}><path d="M9 20H4c-2 0-3-1-3-3V4c0-2 1-3 3-3h13c1 0 2 1 2 3v2H1M7 1v19M1 13h7M13 1v5" stroke={D} strokeWidth="1.8" /><path d="M23 10H11l6 6-6 6h13" stroke={D} strokeWidth="1.9" /></Svg>;
  if (k === "fx") return <Svg w={18}><path d="M9 20H4c-2 0-3-1-3-3V4c0-2 1-3 3-3h13c1 0 2 1 2 3v5M1 6h10M7 1v19M13 1v4" stroke={D} strokeWidth="1.8" /><text x="8" y="22" fontSize="18" fontWeight="700" fontStyle="italic" fill={D} fontFamily="Liberation Serif">fx</text></Svg>;
  return null;
};

const bonus = ["Average", "Department", "Good", "Poor", "Very Good", "Very Poor"].map((t) => [t, ""]);
const employee = [["Average Rating ...", "calc"], ["Bonus Amount", "sum"], ["Bonus Percenta...", "sum"], ["Column", "sum"], ["Department", ""], ["Employees Belo...", "calc"], ["Gender", ""], ["Location", ""], ["Name", ""], ["Numeric Rating", "sum"], ["Rating", ""], ["Rating Count b...", "calc"], ["Salary", "sigma"], ["Salary Band", "fx"], ["Total Pay", "sum"]];

const FieldTable = ({ name, fields }) => (
  <>
    <div className="flex h-[30px] items-center pl-[7px]">
      <Svg w={15} className="-mt-px"><path d="m1 6 11 11L23 6" stroke={D} strokeWidth="1.5" /></Svg>
      <Svg w={16} className="ml-[4px]"><rect x="1" y="1" width="22" height="22" rx="4" stroke={D} strokeWidth="2" /><path d="M1 8h22M1 16h22M8 1v22M16 1v22" stroke={D} strokeWidth="1.8" /></Svg>
      <span className="ml-[6px] whitespace-nowrap">{name}</span>
    </div>
    {fields.map(([t, k]) => (
      <div key={t} className="flex h-[30px] items-center whitespace-nowrap pl-[45px]">
        <span className="size-[15px] shrink-0 rounded-[2px] border border-[#797775]" />
        <span className="ml-[10px] mr-[3px] flex w-[19px] shrink-0 items-center"><FieldIcon k={k} /></span>
        <span>{t}</span>
      </div>
    ))}
  </>
);

function DataPane() {
  return (
    <section className="flex w-[227px] shrink-0 flex-col border-l border-r border-[#e1dfdd] bg-[#f3f2f1] pl-[10px] text-[14.4px] tracking-[-0.002em] text-[#323130]">
      <PaneHead title="Data" />
      <div className="-ml-[5px] mt-[9px] flex h-[30px] w-[215px] shrink-0 items-center rounded border border-[#d2d0ce] border-b-[#605e5c] bg-white pl-[14px] text-[17px] tracking-[-0.015em] text-[#605e5c]">
        <Svg w={18}><circle cx="9.5" cy="9.5" r="8" stroke="#484644" strokeWidth="1.6" /><path d="m15 15 8 8" stroke="#484644" strokeWidth="1.6" /></Svg>
        <span className="ml-[8px] pt-[2px]">Search</span>
      </div>
      <div className="mt-[11px]">
        <FieldTable name="Bonus Rules" fields={bonus} />
        <FieldTable name="PMR-G Employee Data" fields={employee} />
      </div>
    </section>
  );
}

const Brush = () => <g><path d="M22 2c2-1 2 1 1 2L14 15l-3-3z" fill="#fff" stroke={D} strokeWidth="1.3" /><path d="M11 13c3 1 3 3 2 5-2 3-7 3-11 2 4-1 4-7 9-7z" fill={B} stroke={S} strokeWidth="1.3" /></g>;
const Cols = () => <path d="M1 9h7v14H1zM8 1h7v22H8zM15 6h7v17h-7z" fill="#fff" stroke={D} strokeWidth="1.5" />;

function RightRail() {
  const cell = "flex h-[40px] w-[40px] items-center justify-center ";
  const on = "border border-[#605e5c] bg-[#e1dfdd]";
  return (
    <aside className="flex w-[40px] flex-col bg-[#faf9f8]">
      <div className={cell + on}><Svg w={23}><path d="M3 5v14c0 5 18 5 18 0V5" fill="#fff" stroke={D} strokeWidth="1.6" /><ellipse cx="12" cy="5" rx="9" ry="4" fill="#fff" stroke={D} strokeWidth="1.6" /></Svg></div>
      <div className={cell + on}><Svg w={23}><Cols /><path d="M13 12v10c0 3 11 3 11 0V12" fill="#fff" stroke={O} strokeWidth="1.6" /><ellipse cx="18.5" cy="12" rx="5.5" ry="2.2" fill="#fff" stroke={O} strokeWidth="1.6" /></Svg></div>
      <div className={cell}><Svg w={23}><path d="M1 9h7v10H1zM8 14V1h7v10M15 6h7" fill="#fff" stroke={D} strokeWidth="1.5" /><g transform="translate(2 4)"><Brush /></g></Svg></div>
      <div className={cell}><Svg w={23}><Cols /><g transform="translate(-2 -1)"><Bolt /></g></Svg></div>
      <div className={cell}><Svg w={23}><g transform="translate(-1 -1)"><Brush /></g><path d="M19 13v11M13.500 18.500h11" stroke="#2f9a4c" strokeWidth="1.7" /></Svg></div>
      <div className={cell}><Svg w={23} className="-mt-px"><path d="M12 0v24M0 12h24" stroke="#111" strokeWidth="1.8" /></Svg></div>
      <div className="mt-auto flex h-[40px] items-center justify-center border-t border-[#e1dfdd]">
        <Svg w={26} className="-mt-px"><circle cx="12" cy="12" r="3.5" stroke={D} strokeWidth="1.5" /><path d="m9.500 1 .5 3-3 1.700L4 4.600 1 9l2.500 2v2.500L1 15.500 4 20l3-1 3 1.500.5 2.500h4l.5-2.500L17.500 19l3 1 2.500-4.500L21 13.500V11l2-2-2.500-4.400-3 1.100L14.500 4 14 1z" stroke={D} strokeWidth="1.5" strokeLinejoin="round" /></Svg>
      </div>
    </aside>
  );
}

function StatusBar() {
  return (
    <footer className="flex h-[30px] shrink-0 items-center border-t border-[#e1dfdd] bg-[#f3f2f1] pl-[5px] text-[14.4px] text-[#484644]">
      <span className="mr-auto pt-px">Page 2 of 5</span>
      <span className="h-[2px] w-[6px] bg-[#605e5c]" />
      <Svg w={124} h={16} vb="0 0 124 16" className="ml-[5px]"><path d="M0 8h124" stroke="#605e5c" strokeWidth="1.2" /><path d="M48 1.500h4.500v13H48z" fill="#605e5c" /><path d="M62.500 4.500v7" stroke="#605e5c" /></Svg>
      <Svg w={10} className="ml-[7px]"><path d="M12 0v24M0 12h24" stroke="#484644" strokeWidth="4" /></Svg>
      <span className="ml-[16px] w-[32px] text-[14px] tracking-[-0.02em] text-[#605e5c]">83%</span>
      <Svg w={20} h={15} vb="0 0 20 15" className="ml-[21px] mr-[23px]"><rect x=".7" y=".7" width="18.6" height="13.6" stroke="#605e5c" strokeWidth="1.4" /><path d="M4 6V4h3M13 4h3v2M4 9v2h3M13 11h3V9" stroke="#605e5c" strokeWidth="1.4" /></Svg>
    </footer>
  );
}

const letterTile = (bg, bg2, l) => <><rect x="7" y="2" width="17" height="20" rx="1" fill={bg2} /><path d="M15 12h9v9h-9z" fill="#000" opacity=".2" /><rect x="0" y="5" width="14" height="14" rx="1" fill={bg} /><text x="7" y="16.5" fontSize="12" fontWeight="700" fill="#fff" textAnchor="middle" fontFamily="Open Sans">{l}</text></>;

const apps = [
  ["task", <path key="t" d="M0 2v3h14V2M0 9h14v9H0zM0 25v-3h14v3M19 2v6M19 14v11M19 9v4" stroke="#fff" strokeWidth="1.6" />],
  ["copilot", null],
  ["explorer", <><path d="M1 3h9l2 3h11v15H1z" fill="#f0b429" /><path d="M1 8h22v13H1z" fill="#ffd766" /><path d="M5 21v-6c0-2 14-2 14 0v6h-4v-3H9v3z" fill="#3a8fdc" /></>, 1],
  ["store", <><path d="M7 6V2h10v4" stroke="#29b6f0" strokeWidth="1.8" /><path d="M1 5h22v15c0 2-1 3-3 3H4c-2 0-3-1-3-3z" fill="#fff" /><path d="M6 9h5.500v5H6z" fill="#f25022" /><path d="M12.500 9H18v5h-5.500z" fill="#7fba00" /><path d="M6 15h5.500v5H6z" fill="#00a4ef" /><path d="M12.500 15H18v5h-5.500z" fill="#ffb900" /></>],
  ["outlook", <><path d="M7 3h13l4 9v9c0 1-1 2-2 2H8z" fill="#1f9be8" /><path d="m7 12 17 0v9l-3 2z" fill="#50d0f5" /><rect x="0" y="5" width="14" height="14" rx="1" fill="#0a64b8" /><circle cx="7" cy="12" r="3.8" stroke="#fff" strokeWidth="2" /></>],
  ["postgres", <path key="p" d="M4 3c3-3 6-1 8-1s9-3 11 2c1 4-2 9-4 11-1 2 2 1 4 1-2 3-6 2-7 1 0 3 0 6-3 7-4 0-3-4-3-9-2 3-4 4-6 1C2 12 0 6 4 3zM10 4c-3 3-1 6-1 9M14 4c4 3 2 9 1 11" fill="#44709c" stroke="#e6eef6" strokeWidth="1.2" />],
  ["excel", letterTile("#107c41", "#21a366", "X")],
  ["word", letterTile("#185abd", "#41a5ee", "W")],
  ["idle", <><rect x="1" y="1" width="20" height="18" fill="#30383c" /><path d="M1 1h20v3H1z" fill="#1a74c0" /><path d="M3 7h8M3 10h10M3 13h5" stroke="#4a9a5a" strokeWidth="1.3" /><path d="M10 9c0-3 8-3 8 0v4c0 2-6 1-7 3v2c-5 0-5-6 0-6h4z" fill="#4b8bbe" /><path d="M20 12c5 0 4 7 0 7h-4c0 1 2 1 2 3-2 3-7 2-7-1v-2c0-3 8-1 9-4z" fill="#ffd94a" /></>],
  ["firefox", <><circle cx="12" cy="13" r="11" fill="#ff6a2a" /><path d="M14 0c2 3 9 6 9 13 0 6-6 11-11 11 8-3 9-11 5-15-2-3-4-4-3-9z" fill="#ffcb33" /><circle cx="12" cy="13" r="5.5" fill="#8447d8" /><path d="M1 10C2 5 4 4 5 3c0 3 5 2 7 5-4 0-4 3-3 4-3 4 2 7 5 6-3 4-13 2-13-8z" fill="#ff9130" /><path d="M2 17c4 5 11 8 18 3-5 6-15 5-18-3z" fill="#f0305a" /></>],
  ["acad", <><rect width="24" height="24" fill="#f6e4e0" /><text x="12" y="21" fontSize="23" fontWeight="700" fill="#b3202c" textAnchor="middle" fontFamily="Open Sans">A</text></>],
  ["youtube", <><rect y="4" width="24" height="17" rx="4" fill="#f00" /><path d="m10 9 6 3.500-6 3.500z" fill="#fff" /></>],
  ["window", <><rect x="1" y="4" width="22" height="17" fill="#f0f0f0" stroke="#808890" strokeWidth="1" /><path d="M1 4h22v3H1z" fill="#808890" /><rect x="7.5" y="9" width="8" height="8" fill="#0a78d6" /><path d="M3 10h3M3 13h3M17 10h4M17 13h4" stroke="#808890" /></>],
  ["edge", <><circle cx="12" cy="12" r="12" fill="#1470c8" /><path d="M0 11C2-3 22-4 24 9c0 6-6 8-9 6 3-7-8-10-15-4z" fill="#35c1a8" /><path d="M2 6c4-6 11-7 16-4-5-1-13 1-18 9z" fill="#30b0ea" /><path d="M9 10c-4 6 1 13 13 9-3 4-9 6-13 4C2 18 3 11 9 10z" fill="#0c4f9e" /></>, 1],
  ["ssms", <><path d="M3 3v12c0 3 12 3 12 0V3" fill="#ffd83a" /><ellipse cx="9" cy="3.5" rx="6" ry="2.5" fill="#f5a24a" /><path d="M17 2h5v5M2 17v5h5" stroke="#3d9a4a" strokeWidth="1.8" /><path d="m11 13 9 10M20 13l-9 10" stroke="#a866c8" strokeWidth="2.2" /></>, 1],
  ["whatsapp", <><path d="M1 23l1.700-6A11 11 0 1 1 7 21.300z" stroke="#25d366" strokeWidth="2.2" /><path d="M8 6c2 0 2 3 2 4s-1 1 0 2 2 2 3 3 2-1 3-1c3 1 2 4-1 4-5 0-9-5-9-8 0-2 1-4 2-4z" fill="#25d366" /></>, 1],
  ["powerbi", <><path d="M13 0h9v24h-9z" fill="#d99a10" /><path d="M8 6h9v18H8z" fill="#edbb25" /><path d="M2 12h9v12H2z" fill="#f9dd60" /></>, 2],
  ["chrome", <><circle cx="12" cy="12" r="12" fill="#fff" /><path d="M12 0c5 0 9 3 10.500 6H12c-3 0-5 2-5.500 4L2 5.500C4 2 8 0 12 0z" fill="#ea4335" /><path d="M22.500 6C26 15 20 24 11.500 24l5.500-8.500c1-2 1-5-1-7.500l-2-2z" fill="#fbc116" /><path d="M1.700 5.700 7 15c1 2 4 3 7 2.500L11.500 24C2 24-2 13 1.700 5.700z" fill="#34a853" /><circle cx="12" cy="12" r="5.5" fill="#fff" /><circle cx="12" cy="12" r="4.4" fill="#4285f4" /></>, 1],
  ["vlc", <><path d="M4 17h16l3 7H1z" fill="#f57f17" /><path d="M10.500 1h3L19 19c-3 2-11 2-14 0z" fill="#f58a1f" /><path d="m9.500 5h5l1 3.500h-7zM7.700 11.500h8.600l1.200 4H6.500z" fill="#f0f0f0" /></>, 1],
];

function Taskbar() {
  return (
    <footer className="flex h-[38px] shrink-0 bg-[linear-gradient(90deg,#232d33_0%,#252f36_32%,#382e27_42%,#352c29_55%,#20222c_68%,#1c2530_76%,#201e2b_82%,#1f1d2b_91%,#26332f_97%,#24302e_100%)] text-white">
      <div className="flex w-[45px] items-center pl-[12px]"><Svg w={20}><path d="m0 3.500 10.500-1.500v9.500H0zM12 1.800 24 0v11.500H12zM0 12.800h10.500v9.400L0 20.700zM12 12.800h12V24l-12-1.800z" fill="#fff" /></Svg></div>
      <div className="flex h-[38px] w-[323px] items-center border border-[#b8b8b8] bg-[#f2f2f2] pl-[14px] text-[18.5px] tracking-[-0.02em] text-[#222]">
        <Svg w={21}><circle cx="15" cy="9" r="7.5" stroke="#111" strokeWidth="1.8" /><path d="M10 14 1 23" stroke="#111" strokeWidth="1.8" /></Svg>
        <span className="ml-[14px]">Search</span>
      </div>
      <div className="ml-[2px] flex">
        {apps.map(([n, g, st]) => (
          <div key={n} className={"flex w-[46px] flex-col items-center " + (st === 2 ? "bg-[#4f5059]" : "")}>
            <div className="flex h-[35px] items-center pt-[3px]">{n === "copilot" ? <CopilotLogo size={19} id="ct" /> : <Svg w={20}>{g}</Svg>}</div>
            {st && <div className={"h-[3px] bg-[#76b9ed] " + (st === 2 ? "w-[46px]" : "w-[35px]")} />}
          </div>
        ))}
      </div>
      <div className="ml-auto flex h-full items-center">
        <Svg w={31} h={32} vb="0 0 31 32"><rect x="1" y="4" width="6" height="24" fill="#2ba8ea" /><path d="M3 9h4M3 15h4M3 21h4" stroke="#0c4f86" strokeWidth="1.3" /><path d="M21 1c4 9 9 13 9 20 0 12-18 12-18 0 0-7 5-11 9-20z" fill="#2eb2f2" /></Svg>
        <span className="ml-[8px] w-[92px] whitespace-nowrap text-[17.5px] tracking-[-0.02em]">Very humid</span>
        <Svg w={17} className="ml-[22px]"><path d="m1 17 11-11 11 11" stroke="#fff" strokeWidth="1.9" /></Svg>
        <Svg w={21} className="ml-[11px]"><path d="M8 6h14v12H4v-6M1 2v4c0 5 6 5 6 0V2M0 4h8M4 9v4" stroke="#fff" strokeWidth="1.6" /><path d="M7 9h8v7H7zM22 9h2v6h-2z" fill="#fff" /></Svg>
        <Svg w={18} className="ml-[11px]"><path d="M2 23C2 11 11 2 23 2M8 23C8 14 14 8 23 8M14 23c0-5 4-9 9-9" stroke="#fff" strokeWidth="1.7" /><circle cx="20.5" cy="21" r="2.2" fill="#fff" /></Svg>
        <Svg w={21} className="ml-[9px]"><path d="M1 9h4l6-6v18l-6-6H1z" stroke="#fff" strokeWidth="1.5" /><path d="M14 9c1 2 1 4 0 6" stroke="#fff" strokeWidth="1.5" /><path d="M17 6c3 4 3 8 0 12M20 3c5 6 5 12 0 18" stroke="#fff" strokeWidth="1.5" opacity=".5" /></Svg>
        <span className="ml-[17px] w-[54px] whitespace-nowrap pt-px text-[15px] tracking-[-0.03em]">8:15 PM</span>
        <Svg w={21} className="ml-[26px]"><path d="M0 1h24v18h-9l-3 4-3-4H0z" fill="#fff" /><path d="M5 6h14M5 10h14M5 14h9" stroke="#333" strokeWidth="1.5" /></Svg>
        <span className="ml-[24px] mr-[5px] h-full w-px bg-[#8a8c8e]" />
      </div>
    </footer>
  );
}

export default function App() {
  return (
    <div className="flex h-[1080px] w-[1920px] flex-col overflow-hidden bg-[#f3f2f1] font-['Open_Sans','Noto_Sans',sans-serif]">
      <TitleBar />
      <MenuTabs />
      <Ribbon />
      <div className="flex h-[812px] shrink-0">
        <LeftRail />
        <div className="flex w-[1376px] shrink-0 flex-col">
          <div className="flex h-[768px]">
            <ReportCanvas />
            <div className="flex w-[41px] flex-col items-center border-l border-[#a19f9d] bg-white pt-[16px]">
              <Expand flip />
              <Svg w={14} className="ml-[6px] mt-[20px]"><path d="M23 1v22L11 16H1V9h10z" stroke="#252423" strokeWidth="2" /></Svg>
              <span className="mt-[11px] pl-[2px] text-[17px] font-semibold leading-5 tracking-[-0.01em] text-[#252423] [writing-mode:vertical-rl]">Filters</span>
            </div>
          </div>
          <PageTabs />
        </div>
        <BuildPane />
        <DataPane />
        <RightRail />
      </div>
      <StatusBar />
      <Taskbar />
    </div>
  );
}
